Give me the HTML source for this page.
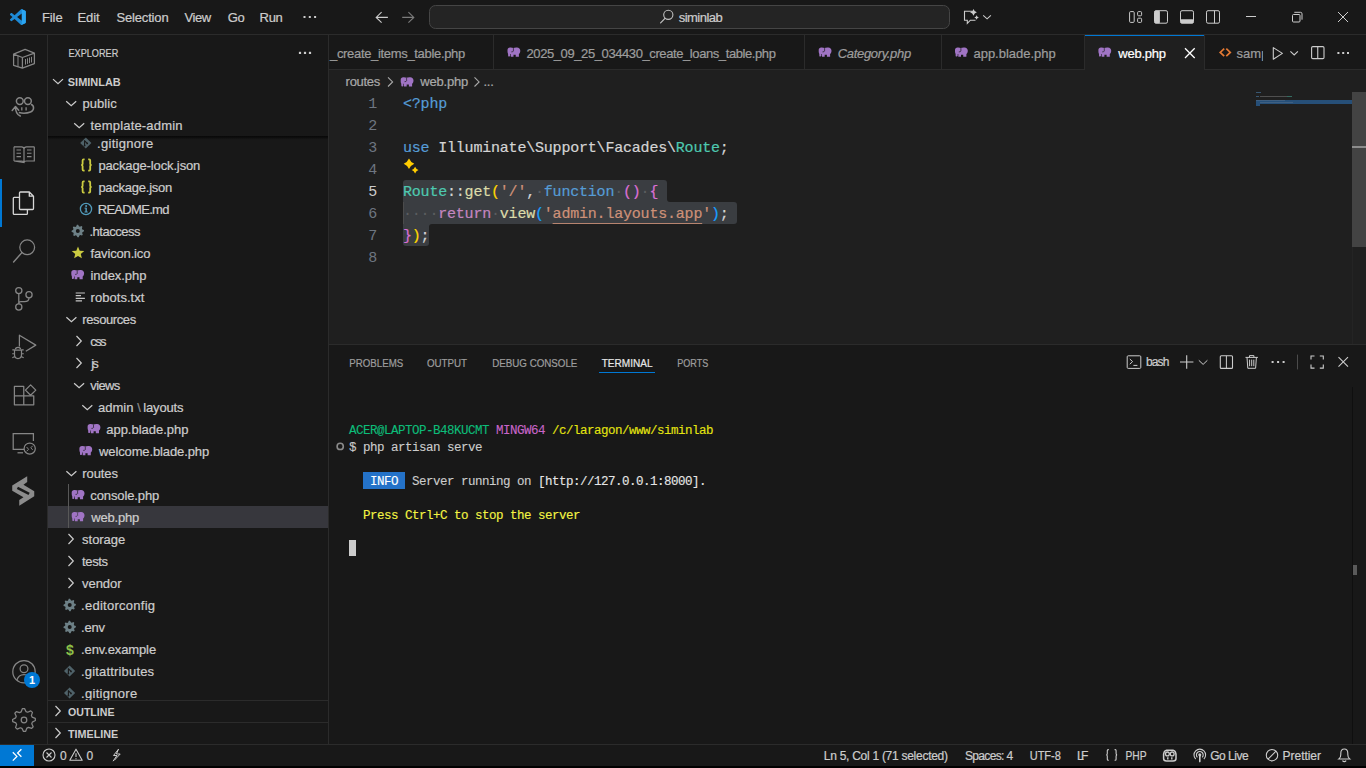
<!DOCTYPE html>
<html><head><meta charset="utf-8"><title>VS Code</title>
<style>*{margin:0;padding:0}html,body{width:1366px;height:768px;overflow:hidden;background:#181818}</style>
</head><body>
<svg width="1366" height="768" viewBox="0 0 1366 768" font-family='"Liberation Sans", sans-serif' style="position:absolute;left:0;top:0">
<defs>
<linearGradient id="shadow" x1="0" y1="0" x2="0" y2="1"><stop offset="0" stop-color="#000" stop-opacity="0.45"/><stop offset="1" stop-color="#000" stop-opacity="0"/></linearGradient>
<clipPath id="c_tree"><rect x="48" y="136" width="280" height="564"/></clipPath>
<clipPath id="c_tabs"><rect x="329" y="35" width="1037" height="35"/></clipPath>
<clipPath id="c_samp"><rect x="1205" y="35" width="58" height="35"/></clipPath>
</defs>
<rect x="0" y="0" width="1366" height="768" fill="#181818" />
<rect x="0" y="34" width="1366" height="1" fill="#2b2b2b" />
<rect x="429.5" y="5.5" width="520" height="23" rx="6" fill="#242424" stroke="#454545" stroke-width="1"/>
<rect x="47" y="35" width="1" height="709" fill="#2b2b2b" />
<rect x="0" y="179" width="2" height="48" fill="#0078d4" />
<rect x="328" y="35" width="1" height="709" fill="#2b2b2b" />
<rect x="48" y="506" width="280" height="22" fill="#37373d" />
<rect x="68" y="484" width="1" height="44" fill="#585858" />
<rect x="329" y="70" width="1037" height="274" fill="#1f1f1f" />
<rect x="329" y="35" width="1037" height="35" fill="#181818" />
<rect x="329" y="69" width="1037" height="1" fill="#2b2b2b" />
<rect x="493" y="35" width="1" height="34" fill="#2b2b2b" />
<rect x="804" y="35" width="1" height="34" fill="#2b2b2b" />
<rect x="941" y="35" width="1" height="34" fill="#2b2b2b" />
<rect x="1084" y="35" width="1" height="34" fill="#2b2b2b" />
<rect x="1204" y="35" width="1" height="34" fill="#2b2b2b" />
<rect x="1085" y="35" width="119" height="35" fill="#1f1f1f" />
<rect x="1085" y="35" width="119" height="1" fill="#0078d4" />
<rect x="329" y="344" width="1037" height="400" fill="#181818" />
<rect x="329" y="344" width="1037" height="1" fill="#2b2b2b" />
<rect x="599" y="372" width="56" height="1" fill="#0078d4" />
<rect x="1352" y="92" width="14" height="155" fill="#434343" />
<rect x="1352" y="146" width="14" height="2" fill="#8c8c8c" />
<rect x="1352" y="247" width="1" height="97" fill="#242424" />
<rect x="1256" y="100" width="96" height="4" fill="#264f78" />
<rect x="1352" y="387" width="1" height="357" fill="#0f0f0f" />
<rect x="1353" y="565" width="4" height="10" fill="#5a5a5a" />
<rect x="48" y="70" width="280" height="66" fill="#181818" />
<rect x="48" y="136" width="280" height="4" fill="url(#shadow)"/>
<rect x="48" y="700" width="280" height="44" fill="#181818" />
<rect x="48" y="700" width="280" height="1" fill="#2b2b2b" />
<rect x="48" y="722" width="280" height="1" fill="#2b2b2b" />
<rect x="0" y="744" width="1366" height="1" fill="#2b2b2b" />
<rect x="0" y="745" width="1366" height="21" fill="#181818" />
<rect x="0" y="766" width="1366" height="2" fill="#000000" />
<rect x="0" y="745" width="34" height="21" fill="#0078d4" />
<path d="M403,183 Q403,180 406,180 H664 Q667,180 667,183 V199 Q667,202 670,202 H734 Q737,202 737,205 V221 Q737,224 734,224 H432 Q429,224 429,227 V243 Q429,246 426,246 H406 Q403,246 403,243 Z" fill="#3a3d41"/>
<text x="377" y="108" text-anchor="end" font-family='"Liberation Mono"' font-size="15" letter-spacing="-0.2" fill="#6e7681">1</text>
<text x="377" y="130" text-anchor="end" font-family='"Liberation Mono"' font-size="15" letter-spacing="-0.2" fill="#6e7681">2</text>
<text x="377" y="152" text-anchor="end" font-family='"Liberation Mono"' font-size="15" letter-spacing="-0.2" fill="#6e7681">3</text>
<text x="377" y="174" text-anchor="end" font-family='"Liberation Mono"' font-size="15" letter-spacing="-0.2" fill="#6e7681">4</text>
<text x="377" y="196" text-anchor="end" font-family='"Liberation Mono"' font-size="15" letter-spacing="-0.2" fill="#cccccc">5</text>
<text x="377" y="218" text-anchor="end" font-family='"Liberation Mono"' font-size="15" letter-spacing="-0.2" fill="#6e7681">6</text>
<text x="377" y="240" text-anchor="end" font-family='"Liberation Mono"' font-size="15" letter-spacing="-0.2" fill="#6e7681">7</text>
<text x="377" y="262" text-anchor="end" font-family='"Liberation Mono"' font-size="15" letter-spacing="-0.2" fill="#6e7681">8</text>
<text y="108" font-family='"Liberation Mono"' font-size="15" letter-spacing="-0.2"><tspan x="403.00" fill="#569cd6" stroke="#569cd6" stroke-width="0.2">&lt;?php</tspan></text>
<text y="152" font-family='"Liberation Mono"' font-size="15" letter-spacing="-0.2"><tspan x="403.00" fill="#569cd6" stroke="#569cd6" stroke-width="0.2">use</tspan><tspan x="438.20" fill="#d4d4d4" stroke="#d4d4d4" stroke-width="0.2">Illuminate\Support\Facades\</tspan><tspan x="675.80" fill="#4ec9b0" stroke="#4ec9b0" stroke-width="0.2">Route</tspan><tspan x="719.80" fill="#d4d4d4" stroke="#d4d4d4" stroke-width="0.2">;</tspan></text>
<text y="196" font-family='"Liberation Mono"' font-size="15" letter-spacing="-0.2"><tspan x="403.00" fill="#4ec9b0" stroke="#4ec9b0" stroke-width="0.2">Route</tspan><tspan x="447.00" fill="#d4d4d4" stroke="#d4d4d4" stroke-width="0.2">::</tspan><tspan x="464.60" fill="#dcdcaa" stroke="#dcdcaa" stroke-width="0.2">get</tspan><tspan x="491.00" fill="#ffd700" stroke="#ffd700" stroke-width="0.2">(</tspan><tspan x="499.80" fill="#ce9178" stroke="#ce9178" stroke-width="0.2">&#x27;/&#x27;</tspan><tspan x="526.20" fill="#d4d4d4" stroke="#d4d4d4" stroke-width="0.2">,</tspan><tspan x="535.00" fill="#5b5d60">·</tspan><tspan x="543.80" fill="#569cd6" stroke="#569cd6" stroke-width="0.2">function</tspan><tspan x="614.20" fill="#5b5d60">·</tspan><tspan x="623.00" fill="#da70d6" stroke="#da70d6" stroke-width="0.2">()</tspan><tspan x="640.60" fill="#5b5d60">·</tspan><tspan x="649.40" fill="#da70d6" stroke="#da70d6" stroke-width="0.2">{</tspan></text>
<text y="218" font-family='"Liberation Mono"' font-size="15" letter-spacing="-0.2"><tspan x="403.00" fill="#5b5d60">····</tspan><tspan x="438.20" fill="#c586c0" stroke="#c586c0" stroke-width="0.2">return</tspan><tspan x="491.00" fill="#5b5d60">·</tspan><tspan x="499.80" fill="#dcdcaa" stroke="#dcdcaa" stroke-width="0.2">view</tspan><tspan x="535.00" fill="#179fff" stroke="#179fff" stroke-width="0.2">(</tspan><tspan x="543.80" fill="#ce9178" stroke="#ce9178" stroke-width="0.2">&#x27;admin.layouts.app&#x27;</tspan><tspan x="711.00" fill="#179fff" stroke="#179fff" stroke-width="0.2">)</tspan><tspan x="719.80" fill="#d4d4d4" stroke="#d4d4d4" stroke-width="0.2">;</tspan></text>
<text y="240" font-family='"Liberation Mono"' font-size="15" letter-spacing="-0.2"><tspan x="403.00" fill="#da70d6" stroke="#da70d6" stroke-width="0.2">}</tspan><tspan x="411.80" fill="#ffd700" stroke="#ffd700" stroke-width="0.2">)</tspan><tspan x="420.60" fill="#d4d4d4" stroke="#d4d4d4" stroke-width="0.2">;</tspan></text>
<rect x="552.6" y="223" width="149.6" height="1" fill="#ce9178" opacity="0.85"/>
<rect x="403" y="202" width="1" height="22" fill="#4b4b4b"/>
<rect x="363" y="472" width="42" height="17" fill="#2472c8"/>
<text y="434" font-family='"Liberation Mono"' font-size="12.5" letter-spacing="-0.5" style="white-space:pre"><tspan x="349.00" fill="#0dbc79" stroke="#0dbc79" stroke-width="0.12">ACER@LAPTOP-B48KUCMT</tspan><tspan x="496.00" fill="#c865c8" stroke="#c865c8" stroke-width="0.12">MINGW64</tspan><tspan x="552.00" fill="#e5e510" stroke="#e5e510" stroke-width="0.12">/c/laragon/www/siminlab</tspan></text>
<text y="451" font-family='"Liberation Mono"' font-size="12.5" letter-spacing="-0.5" style="white-space:pre"><tspan x="349.00" fill="#cccccc" stroke="#cccccc" stroke-width="0.12">$ php artisan serve</tspan></text>
<text y="485" font-family='"Liberation Mono"' font-size="12.5" letter-spacing="-0.5" style="white-space:pre"><tspan x="363.00" fill="#ffffff" stroke="#ffffff" stroke-width="0.12"> INFO </tspan><tspan x="405.00" fill="#cccccc" stroke="#cccccc" stroke-width="0.12"> Server running on </tspan><tspan x="538.00" fill="#e5e5e5" stroke="#e5e5e5" stroke-width="0.12">[http</tspan><tspan x="573.00" fill="#e5e5e5" stroke="#e5e5e5" stroke-width="0.12">:</tspan><tspan x="580.00" fill="#e5e5e5" stroke="#e5e5e5" stroke-width="0.12">//127.0.0.1:8000].</tspan></text>
<text y="519" font-family='"Liberation Mono"' font-size="12.5" letter-spacing="-0.5" style="white-space:pre"><tspan x="363.00" fill="#f5f543" stroke="#f5f543" stroke-width="0.12">Press Ctrl+C to stop the server</tspan></text>
<rect x="349" y="540" width="7" height="16" fill="#cccccc"/>
<text x="42.00" y="22" font-size="13" fill="#cccccc" letter-spacing="-0.106" stroke="#cccccc" stroke-width="0.22">File</text>
<text x="77.50" y="22" font-size="13" fill="#cccccc" letter-spacing="-0.063" stroke="#cccccc" stroke-width="0.22">Edit</text>
<text x="116.50" y="22" font-size="13" fill="#cccccc" letter-spacing="-0.169" stroke="#cccccc" stroke-width="0.22">Selection</text>
<text x="184.50" y="22" font-size="13" fill="#cccccc" letter-spacing="-0.451" stroke="#cccccc" stroke-width="0.22">View</text>
<text x="227.80" y="22" font-size="13" fill="#cccccc" letter-spacing="-0.412" stroke="#cccccc" stroke-width="0.22">Go</text>
<text x="259.60" y="22" font-size="13" fill="#cccccc" letter-spacing="-0.309" stroke="#cccccc" stroke-width="0.22">Run</text>
<text x="678.70" y="22" font-size="13" fill="#cccccc" letter-spacing="-0.522" stroke="#cccccc" stroke-width="0.22">siminlab</text>
<text x="68.50" y="57" font-size="11" fill="#cccccc" textLength="49.75" lengthAdjust="spacingAndGlyphs" stroke="#cccccc" stroke-width="0.22">EXPLORER</text>
<text x="97.00" y="148" font-size="13" fill="#cccccc" letter-spacing="0.306" clip-path="url(#c_tree)" stroke="#cccccc" stroke-width="0.22">.gitignore</text>
<text x="98.40" y="170" font-size="13" fill="#cccccc" letter-spacing="-0.133" clip-path="url(#c_tree)" stroke="#cccccc" stroke-width="0.22">package-lock.json</text>
<text x="98.40" y="192" font-size="13" fill="#cccccc" letter-spacing="-0.253" clip-path="url(#c_tree)" stroke="#cccccc" stroke-width="0.22">package.json</text>
<text x="97.70" y="214" font-size="13" fill="#cccccc" letter-spacing="-0.695" clip-path="url(#c_tree)" stroke="#cccccc" stroke-width="0.22">README.md</text>
<text x="89.50" y="236" font-size="13" fill="#cccccc" letter-spacing="-0.502" clip-path="url(#c_tree)" stroke="#cccccc" stroke-width="0.22">.htaccess</text>
<text x="90.50" y="258" font-size="13" fill="#cccccc" letter-spacing="-0.149" clip-path="url(#c_tree)" stroke="#cccccc" stroke-width="0.22">favicon.ico</text>
<text x="90.50" y="280" font-size="13" fill="#cccccc" letter-spacing="-0.056" clip-path="url(#c_tree)" stroke="#cccccc" stroke-width="0.22">index.php</text>
<text x="90.50" y="302" font-size="13" fill="#cccccc" letter-spacing="0.050" clip-path="url(#c_tree)" stroke="#cccccc" stroke-width="0.22">robots.txt</text>
<text x="82.30" y="324" font-size="13" fill="#cccccc" letter-spacing="-0.397" clip-path="url(#c_tree)" stroke="#cccccc" stroke-width="0.22">resources</text>
<text x="90.30" y="346" font-size="13" fill="#cccccc" letter-spacing="-1.650" clip-path="url(#c_tree)" stroke="#cccccc" stroke-width="0.22">css</text>
<text x="91.30" y="368" font-size="13" fill="#cccccc" letter-spacing="-1.988" clip-path="url(#c_tree)" stroke="#cccccc" stroke-width="0.22">js</text>
<text x="90.30" y="390" font-size="13" fill="#cccccc" letter-spacing="-0.627" clip-path="url(#c_tree)" stroke="#cccccc" stroke-width="0.22">views</text>
<text x="106.20" y="434" font-size="13" fill="#cccccc" letter-spacing="-0.007" clip-path="url(#c_tree)" stroke="#cccccc" stroke-width="0.22">app.blade.php</text>
<text x="99.00" y="456" font-size="13" fill="#cccccc" letter-spacing="-0.118" clip-path="url(#c_tree)" stroke="#cccccc" stroke-width="0.22">welcome.blade.php</text>
<text x="82.30" y="478" font-size="13" fill="#cccccc" letter-spacing="-0.106" clip-path="url(#c_tree)" stroke="#cccccc" stroke-width="0.22">routes</text>
<text x="90.30" y="500" font-size="13" fill="#cccccc" letter-spacing="-0.118" clip-path="url(#c_tree)" stroke="#cccccc" stroke-width="0.22">console.php</text>
<text x="91.30" y="522" font-size="13" fill="#cccccc" letter-spacing="-0.203" clip-path="url(#c_tree)" stroke="#cccccc" stroke-width="0.22">web.php</text>
<text x="82.10" y="544" font-size="13" fill="#cccccc" letter-spacing="-0.038" clip-path="url(#c_tree)" stroke="#cccccc" stroke-width="0.22">storage</text>
<text x="82.10" y="566" font-size="13" fill="#cccccc" letter-spacing="-0.363" clip-path="url(#c_tree)" stroke="#cccccc" stroke-width="0.22">tests</text>
<text x="82.10" y="588" font-size="13" fill="#cccccc" letter-spacing="-0.064" clip-path="url(#c_tree)" stroke="#cccccc" stroke-width="0.22">vendor</text>
<text x="81.10" y="610" font-size="13" fill="#cccccc" letter-spacing="0.259" clip-path="url(#c_tree)" stroke="#cccccc" stroke-width="0.22">.editorconfig</text>
<text x="81.10" y="632" font-size="13" fill="#cccccc" letter-spacing="-0.224" clip-path="url(#c_tree)" stroke="#cccccc" stroke-width="0.22">.env</text>
<text x="81.10" y="654" font-size="13" fill="#cccccc" letter-spacing="-0.121" clip-path="url(#c_tree)" stroke="#cccccc" stroke-width="0.22">.env.example</text>
<text x="81.00" y="676" font-size="13" fill="#cccccc" letter-spacing="0.176" clip-path="url(#c_tree)" stroke="#cccccc" stroke-width="0.22">.gitattributes</text>
<text x="81.00" y="698" font-size="13" fill="#cccccc" letter-spacing="0.306" clip-path="url(#c_tree)" stroke="#cccccc" stroke-width="0.22">.gitignore</text>
<text x="98.00" y="412" font-size="13" fill="#cccccc" letter-spacing="0.006" clip-path="url(#c_tree)" stroke="#cccccc" stroke-width="0.22">admin</text>
<text x="137.20" y="412" font-size="13" fill="#8b8b8b" clip-path="url(#c_tree)" stroke="#8b8b8b" stroke-width="0.22">\</text>
<text x="143.30" y="412" font-size="13" fill="#cccccc" letter-spacing="-0.165" clip-path="url(#c_tree)" stroke="#cccccc" stroke-width="0.22">layouts</text>
<text x="67.80" y="85.5" font-size="11" fill="#cccccc" textLength="52.94" lengthAdjust="spacingAndGlyphs" font-weight="bold">SIMINLAB</text>
<text x="82.50" y="108" font-size="13" fill="#cccccc" letter-spacing="0.047" stroke="#cccccc" stroke-width="0.22">public</text>
<text x="90.50" y="130" font-size="13" fill="#cccccc" letter-spacing="0.187" stroke="#cccccc" stroke-width="0.22">template-admin</text>
<text x="68.00" y="716" font-size="11" fill="#cccccc" textLength="46.52" lengthAdjust="spacingAndGlyphs" font-weight="bold">OUTLINE</text>
<text x="68.00" y="738" font-size="11" fill="#cccccc" textLength="50.23" lengthAdjust="spacingAndGlyphs" font-weight="bold">TIMELINE</text>
<text x="330.00" y="57.5" font-size="13" fill="#9d9d9d" letter-spacing="-0.325" clip-path="url(#c_tabs)" stroke="#9d9d9d" stroke-width="0.22">_create_items_table.php</text>
<text x="526.50" y="57.5" font-size="13" fill="#9d9d9d" letter-spacing="-0.407" stroke="#9d9d9d" stroke-width="0.22">2025_09_25_034430_create_loans_table.php</text>
<text x="837.80" y="57.5" font-size="13" fill="#9d9d9d" font-style="italic" letter-spacing="-0.341" stroke="#9d9d9d" stroke-width="0.22">Category.php</text>
<text x="973.50" y="57.5" font-size="13" fill="#9d9d9d" letter-spacing="-0.023" stroke="#9d9d9d" stroke-width="0.22">app.blade.php</text>
<text x="1118.30" y="57.5" font-size="13" fill="#ffffff" letter-spacing="-0.237" stroke="#ffffff" stroke-width="0.22">web.php</text>
<text x="1236.60" y="57.5" font-size="13" fill="#9d9d9d" clip-path="url(#c_samp)" stroke="#9d9d9d" stroke-width="0.22">sample.html</text>
<text x="345.60" y="86" font-size="13" fill="#a9a9a9" letter-spacing="-0.286" stroke="#a9a9a9" stroke-width="0.22">routes</text>
<text x="420.20" y="86" font-size="13" fill="#a9a9a9" letter-spacing="-0.187" stroke="#a9a9a9" stroke-width="0.22">web.php</text>
<text x="483.40" y="86" font-size="13" fill="#a9a9a9" letter-spacing="-0.212" stroke="#a9a9a9" stroke-width="0.22">...</text>
<text x="349.30" y="367" font-size="11" fill="#9d9d9d" textLength="53.90" lengthAdjust="spacingAndGlyphs" stroke="#9d9d9d" stroke-width="0.22">PROBLEMS</text>
<text x="426.90" y="367" font-size="11" fill="#9d9d9d" textLength="40.15" lengthAdjust="spacingAndGlyphs" stroke="#9d9d9d" stroke-width="0.22">OUTPUT</text>
<text x="492.20" y="367" font-size="11" fill="#9d9d9d" textLength="85.20" lengthAdjust="spacingAndGlyphs" stroke="#9d9d9d" stroke-width="0.22">DEBUG CONSOLE</text>
<text x="601.70" y="367" font-size="11" fill="#e7e7e7" textLength="50.81" lengthAdjust="spacingAndGlyphs" stroke="#e7e7e7" stroke-width="0.22">TERMINAL</text>
<text x="677.20" y="367" font-size="11" fill="#9d9d9d" textLength="31.08" lengthAdjust="spacingAndGlyphs" stroke="#9d9d9d" stroke-width="0.22">PORTS</text>
<text x="1145.90" y="366" font-size="12" fill="#cccccc" letter-spacing="-0.816" stroke="#cccccc" stroke-width="0.22">bash</text>
<text x="60.00" y="760" font-size="12" fill="#cccccc" stroke="#cccccc" stroke-width="0.22">0</text>
<text x="86.60" y="760" font-size="12" fill="#cccccc" stroke="#cccccc" stroke-width="0.22">0</text>
<text x="823.80" y="760" font-size="12" fill="#cccccc" letter-spacing="-0.273" stroke="#cccccc" stroke-width="0.22">Ln 5, Col 1 (71 selected)</text>
<text x="965.00" y="760" font-size="12" fill="#cccccc" letter-spacing="-0.662" stroke="#cccccc" stroke-width="0.22">Spaces: 4</text>
<text x="1029.70" y="760" font-size="12" fill="#cccccc" textLength="31.20" lengthAdjust="spacingAndGlyphs" stroke="#cccccc" stroke-width="0.22">UTF-8</text>
<text x="1077.00" y="760" font-size="12" fill="#cccccc" letter-spacing="-2.574" stroke="#cccccc" stroke-width="0.22">LF</text>
<text x="1125.40" y="760" font-size="12" fill="#cccccc" textLength="21.20" lengthAdjust="spacingAndGlyphs" stroke="#cccccc" stroke-width="0.22">PHP</text>
<text x="1210.20" y="760" font-size="12" fill="#cccccc" letter-spacing="-0.480" stroke="#cccccc" stroke-width="0.22">Go Live</text>
<text x="1282.60" y="760" font-size="12" fill="#cccccc" letter-spacing="-0.040" stroke="#cccccc" stroke-width="0.22">Prettier</text>
<g transform="translate(9.9,9.1) scale(0.159)"><path d="M96.46 10.8L75.86.87C73.47-.28 70.62.2 68.75 2.08L29.34 38.05 12.17 25.02c-1.6-1.21-3.83-1.11-5.32.24L1.34 30.28c-1.82 1.65-1.82 4.51 0 6.16L16.23 50 1.34 63.56c-1.82 1.65-1.82 4.51 0 6.16l5.51 5.01c1.49 1.36 3.72 1.46 5.32.24l17.17-13.03 39.41 35.96c1.87 1.87 4.72 2.36 7.11 1.21l20.6-9.92C98.6 88.02 100 85.77 100 83.31V16.69c0-2.46-1.4-4.71-3.54-5.89zM75.01 72.7 45.1 50l29.91-22.7v45.4z" fill="#1e8ad6"/><path d="M75.86.87 96.46 10.8C98.6 11.98 100 14.23 100 16.69V83.31C100 85.77 98.6 88.02 96.46 89.2L75.86 99.13C73.5 100.2 71 100 69 98.5 71.5 99 75 97.5 75 94V6C75 2.5 71.5 1 69 1.5 71 0 73.5-.2 75.86.87Z" fill="#2ba5f1"/></g>
<rect x="303.5" y="16" width="2" height="2" fill="#cccccc"/>
<rect x="308.8" y="16" width="2" height="2" fill="#cccccc"/>
<rect x="314.1" y="16" width="2" height="2" fill="#cccccc"/>
<path d="M387.9,17.4 H376.2 M381.6,12.2 L376.2,17.4 L381.6,22.6" fill="none" stroke="#cccccc" stroke-width="1.1"/>
<path d="M402.2,17.4 H413.8 M408.4,12.2 L413.8,17.4 L408.4,22.6" fill="none" stroke="#7b7b7b" stroke-width="1.1"/>
<circle cx="668.3" cy="14.8" r="4.6" fill="none" stroke="#c0c0c0" stroke-width="1.1"/>
<path d="M665,18.3 L660.6,22.9" fill="none" stroke="#c0c0c0" stroke-width="1.2" stroke-linecap="round"/>
<path d="M972,11.3 H964.5 V20.2 H967.3 V23.3 L970.4,20.2 H975.5" fill="none" stroke="#cccccc" stroke-width="1.1"/>
<path d="M973.5,8.9 Q974.248,11.552000000000001 976.9,12.3 Q974.248,13.048 973.5,15.700000000000001 Q972.752,13.048 970.1,12.3 Q972.752,11.552000000000001 973.5,8.9 Z" fill="#cccccc"/>
<path d="M976.6,15.2 Q977.106,16.994 978.9,17.5 Q977.106,18.006 976.6,19.8 Q976.094,18.006 974.3000000000001,17.5 Q976.094,16.994 976.6,15.2 Z" fill="#cccccc"/>
<polyline points="983.2,15.3 987.1,18.8 990.9,15.3" fill="none" stroke="#cccccc" stroke-width="1.1"/>
<rect x="1129.6" y="11.6" width="4.6" height="10.8" rx="1" fill="none" stroke="#cccccc" stroke-width="1"/>
<rect x="1137.6" y="11.6" width="4" height="4.2" rx="1" fill="none" stroke="#cccccc" stroke-width="1"/>
<rect x="1137.6" y="18.2" width="4" height="4.2" rx="1" fill="none" stroke="#cccccc" stroke-width="1"/>
<rect x="1154.5" y="10.7" width="13" height="12.5" rx="1.5" fill="none" stroke="#cccccc" stroke-width="1"/>
<rect x="1154.5" y="10.7" width="5.4" height="12.5" rx="1" fill="#cccccc"/>
<rect x="1180.5" y="10.7" width="13" height="12.5" rx="1.5" fill="none" stroke="#cccccc" stroke-width="1"/>
<rect x="1180.5" y="19.2" width="13" height="4" rx="1" fill="#cccccc"/>
<rect x="1206.5" y="10.7" width="13" height="12.5" rx="1.5" fill="none" stroke="#cccccc" stroke-width="1"/>
<rect x="1214" y="10.7" width="1" height="12.5" fill="#cccccc"/>
<rect x="1246" y="16" width="10" height="1" fill="#cccccc"/>
<rect x="1292.5" y="14.5" width="7.5" height="7.5" rx="1" fill="none" stroke="#cccccc" stroke-width="1"/>
<path d="M1294.3,12.3 H1300.5 Q1302,12.3 1302,13.8 V19.7" fill="none" stroke="#cccccc" stroke-width="1"/>
<path d="M1338,12 L1348,22 M1348,12 L1338,22" stroke="#cccccc" stroke-width="1"/>
<path d="M25.1,49.4 L34.4,53.1 L22.4,57.5 L13.6,54.1 Z M13.6,54.1 V65.3 L22.4,68.2 V57.5 M22.4,68.2 L34.4,63.6 V53.1" fill="none" stroke="#868686" stroke-width="1.25" stroke-linejoin="round"/>
<path d="M18,55.8 V66.6 M25.5,59 V64.6 M27.5,58.3 V63.9 M29.5,57.5 V63.2 M31.5,56.8 V62.5" fill="none" stroke="#868686" stroke-width="1"/>
<circle cx="19.8" cy="101.1" r="3.4" fill="none" stroke="#868686" stroke-width="1.5"/>
<circle cx="27.9" cy="101.1" r="3.4" fill="none" stroke="#868686" stroke-width="1.5"/>
<path d="M31,104.2 C34.5,105.5 34.5,110.5 30.5,112 C27,113.4 22,113.3 18.8,112.6" fill="none" stroke="#868686" stroke-width="1.5"/>
<path d="M21.8,107.2 V110.6 M26.1,107.2 V110.6" stroke="#868686" stroke-width="1.3"/>
<path d="M15.5,107 C15.5,111 16.5,114.5 20.3,116 M12.2,110.4 L15.5,106.6 L18.7,110.2" fill="none" stroke="#868686" stroke-width="1.5" stroke-linecap="round" stroke-linejoin="round"/>
<path d="M14,146.8 H21.5 Q24,146.8 24,149 V162.5 M24,162.5 Q24,161 21.5,161 H14 Z M34.3,146.8 H26.5 Q24,146.8 24,149 M24,162.5 Q24,161 26.5,161 H34.3 V146.8" fill="none" stroke="#868686" stroke-width="1.2"/>
<path d="M14,146.8 V161 M16.5,150 H21 M16.5,153.3 H21 M16.5,156.6 H21 M27,150 H31.5 M27,153.3 H31.5 M27,156.6 H31.5" fill="none" stroke="#868686" stroke-width="1.1"/>
<path d="M19.5,196.5 V208.6 Q19.5,209.5 20.4,209.5 H32.6 Q33.5,209.5 33.5,208.6 V196.2 L29.3,192 H20.4 Q19.5,192 19.5,192.9 Z M29.3,192 V196.2 H33.5" fill="none" stroke="#d7d7d7" stroke-width="1.3" stroke-linejoin="round"/>
<path d="M19.5,197.3 H14.2 Q13.3,197.3 13.3,198.2 V213.5 Q13.3,214.4 14.2,214.4 H26.5 Q27.4,214.4 27.4,213.5 V209.5" fill="none" stroke="#d7d7d7" stroke-width="1.3"/>
<circle cx="27.2" cy="247.3" r="7.4" fill="none" stroke="#868686" stroke-width="1.25"/>
<path d="M21.9,252.6 L13.6,262" stroke="#868686" stroke-width="1.4" stroke-linecap="round"/>
<circle cx="18.8" cy="290.6" r="3.1" fill="none" stroke="#868686" stroke-width="1.25"/>
<circle cx="18.8" cy="307" r="3.1" fill="none" stroke="#868686" stroke-width="1.25"/>
<circle cx="29" cy="294.8" r="3.1" fill="none" stroke="#868686" stroke-width="1.25"/>
<path d="M18.8,293.7 V303.9 M29,297.9 Q29,301.5 24.5,301.5 H21 Q18.8,301.5 18.8,303.5" fill="none" stroke="#868686" stroke-width="1.25"/>
<path d="M19.4,346.5 V335.2 L35.8,345.1 L25.8,351.2" fill="none" stroke="#868686" stroke-width="1.25" stroke-linejoin="round"/>
<path d="M15.4,349.6 Q15.4,347.4 18,347.4 Q20.6,347.4 20.6,349.6" fill="none" stroke="#868686" stroke-width="1.2"/>
<path d="M14.5,350.2 H21.5 V354.6 Q21.5,358.6 18,358.6 Q14.5,358.6 14.5,354.6 Z" fill="none" stroke="#868686" stroke-width="1.2"/>
<path d="M12.3,349.9 H14.5 M21.5,349.9 H23.7 M12.2,353.8 H14.5 M21.5,353.8 H23.8 M12.3,357.8 L14.8,356.6 M23.7,357.8 L21.2,356.6" fill="none" stroke="#868686" stroke-width="1.1"/>
<path d="M14.4,386.4 H23.75 V404.75 H14.4 Z M14.4,395.75 H33.75 V404.75 H23.75" fill="none" stroke="#868686" stroke-width="1.25" stroke-linejoin="round"/>
<path d="M30.6,384.9 L35.8,390.1 L30.6,395.3 L25.4,390.1 Z" fill="none" stroke="#868686" stroke-width="1.25" stroke-linejoin="round"/>
<path d="M24,449.3 H13.2 V433.5 H33.4 V441" fill="none" stroke="#868686" stroke-width="1.25"/>
<path d="M17.5,452.8 H23" stroke="#868686" stroke-width="1.25"/>
<circle cx="29.7" cy="448.6" r="5.6" fill="#181818" stroke="#868686" stroke-width="1.25"/>
<path d="M26.6,447 L28.6,449.3 L26.6,451.3 M32.7,445.8 L30.8,447.8 L32.7,449.9" fill="none" stroke="#868686" stroke-width="1"/>
<polygon points="27.21,476.22 12.22,485.59 12.22,490.74 23.46,497.30 19.25,500.12 19.25,505.74 34.24,496.37 34.24,491.21 23.46,484.65 27.21,482.07" fill="#8c8c8c"/>
<path d="M17.4,487.9 L29.1,493.8" stroke="#181818" stroke-width="2.6"/>
<circle cx="24" cy="671.7" r="11.2" fill="none" stroke="#868686" stroke-width="1.25"/>
<circle cx="24" cy="668.8" r="3.9" fill="none" stroke="#868686" stroke-width="1.25"/>
<path d="M16.8,680.3 Q18.5,674.5 24,674.5 Q29.5,674.5 31.2,680.3" fill="none" stroke="#868686" stroke-width="1.25"/>
<circle cx="32" cy="680" r="8" fill="#0078d4"/>
<text x="32" y="684.2" text-anchor="middle" font-size="11" font-weight="bold" fill="#ffffff">1</text>
<polygon points="22.33,708.72 24.56,708.61 26.09,711.66 27.68,712.23 30.79,710.84 32.45,712.34 31.38,715.58 32.10,717.10 35.28,718.33 35.39,720.56 32.34,722.09 31.77,723.68 33.16,726.79 31.66,728.45 28.42,727.38 26.90,728.10 25.67,731.28 23.44,731.39 21.91,728.34 20.32,727.77 17.21,729.16 15.55,727.66 16.62,724.42 15.90,722.90 12.72,721.67 12.61,719.44 15.66,717.91 16.23,716.32 14.84,713.21 16.34,711.55 19.58,712.62 21.10,711.90" fill="none" stroke="#868686" stroke-width="1.25" stroke-linejoin="round"/><circle cx="24" cy="720" r="2.8" fill="none" stroke="#868686" stroke-width="1.25"/>
<rect x="298.9" y="51.8" width="2.2" height="2.2" fill="#cccccc"/>
<rect x="303.9" y="51.8" width="2.2" height="2.2" fill="#cccccc"/>
<rect x="308.9" y="51.8" width="2.2" height="2.2" fill="#cccccc"/>
<polyline points="53,79.10000000000001 58.0,83.7 63,79.10000000000001" fill="none" stroke="#cccccc" stroke-width="1.2"/>
<polyline points="66.2,101.2 71.2,105.8 76.2,101.2" fill="none" stroke="#cccccc" stroke-width="1.2"/>
<polyline points="74.2,123.2 79.2,127.8 84.2,123.2" fill="none" stroke="#cccccc" stroke-width="1.2"/>
<polyline points="66.4,317.2 71.4,321.8 76.4,317.2" fill="none" stroke="#cccccc" stroke-width="1.2"/>
<polyline points="76.5,336.0 81.3,341 76.5,346.0" fill="none" stroke="#cccccc" stroke-width="1.2"/>
<polyline points="76.5,358.0 81.3,363 76.5,368.0" fill="none" stroke="#cccccc" stroke-width="1.2"/>
<polyline points="74.1,383.2 79.1,387.8 84.1,383.2" fill="none" stroke="#cccccc" stroke-width="1.2"/>
<polyline points="82.3,405.2 87.3,409.8 92.3,405.2" fill="none" stroke="#cccccc" stroke-width="1.2"/>
<polyline points="66.4,471.2 71.4,475.8 76.4,471.2" fill="none" stroke="#cccccc" stroke-width="1.2"/>
<polyline points="68.5,534.0 73.3,539 68.5,544.0" fill="none" stroke="#cccccc" stroke-width="1.2"/>
<polyline points="68.5,556.0 73.3,561 68.5,566.0" fill="none" stroke="#cccccc" stroke-width="1.2"/>
<polyline points="68.5,578.0 73.3,583 68.5,588.0" fill="none" stroke="#cccccc" stroke-width="1.2"/>
<polyline points="55.5,706.0 60.3,711 55.5,716.0" fill="none" stroke="#cccccc" stroke-width="1.2"/>
<polyline points="55.5,728.0 60.3,733 55.5,738.0" fill="none" stroke="#cccccc" stroke-width="1.2"/>
<g clip-path="url(#c_tree)"><path d="M85.8,137.4 L91.39999999999999,143 L85.8,148.6 L80.2,143 Z" fill="#4f6269"/><path d="M84.2,140.4 L87.0,143.2 M84.6,140.8 V145.6" stroke="#181818" stroke-width="1.1"/><circle cx="87.2" cy="143.4" r="0.9" fill="#181818"/><circle cx="84.6" cy="145.6" r="0.9" fill="#181818"/><path d="M84.6,159.4 H83.6 Q82.6,159.4 82.6,160.4 V164 Q82.6,165 81.19999999999999,165 Q82.6,165 82.6,166 V169.6 Q82.6,170.6 83.6,170.6 H84.6" fill="none" stroke="#cbcb41" stroke-width="1.8"/><path d="M88.19999999999999,159.4 H89.19999999999999 Q90.19999999999999,159.4 90.19999999999999,160.4 V164 Q90.19999999999999,165 91.6,165 Q90.19999999999999,165 90.19999999999999,166 V169.6 Q90.19999999999999,170.6 89.19999999999999,170.6 H88.19999999999999" fill="none" stroke="#cbcb41" stroke-width="1.8"/><path d="M84.6,181.4 H83.6 Q82.6,181.4 82.6,182.4 V186 Q82.6,187 81.19999999999999,187 Q82.6,187 82.6,188 V191.6 Q82.6,192.6 83.6,192.6 H84.6" fill="none" stroke="#cbcb41" stroke-width="1.8"/><path d="M88.19999999999999,181.4 H89.19999999999999 Q90.19999999999999,181.4 90.19999999999999,182.4 V186 Q90.19999999999999,187 91.6,187 Q90.19999999999999,187 90.19999999999999,188 V191.6 Q90.19999999999999,192.6 89.19999999999999,192.6 H88.19999999999999" fill="none" stroke="#cbcb41" stroke-width="1.8"/><circle cx="86" cy="209" r="5.6" fill="none" stroke="#519aba" stroke-width="1.3"/><circle cx="86.1" cy="206.1" r="1" fill="#519aba"/><rect x="85.4" y="207.7" width="1.5" height="4.4" fill="#519aba"/><rect x="84.5" y="207.7" width="1.5" height="0.9" fill="#519aba"/><rect x="84.5" y="211.5" width="3.3" height="1" fill="#519aba"/><polygon points="76.89,224.87 78.10,224.81 78.97,226.34 79.85,226.66 81.49,226.02 82.39,226.84 81.92,228.53 82.32,229.38 83.93,230.09 83.99,231.30 82.46,232.17 82.14,233.05 82.78,234.69 81.96,235.59 80.27,235.12 79.42,235.52 78.71,237.13 77.50,237.19 76.63,235.66 75.75,235.34 74.11,235.98 73.21,235.16 73.68,233.47 73.28,232.62 71.67,231.91 71.61,230.70 73.14,229.83 73.46,228.95 72.82,227.31 73.64,226.41 75.33,226.88 76.18,226.48" fill="#6d8086"/><circle cx="77.8" cy="231" r="2.0" fill="#181818"/><polygon points="78.00,246.40 79.70,250.65 84.28,250.96 80.76,253.90 81.88,258.34 78.00,255.90 74.12,258.34 75.24,253.90 71.72,250.96 76.30,250.65" fill="#cbcb41"/><g transform="translate(71.3,269.9) scale(1.0)"><path d="M2.6,0.1 C4,0 5,0.3 5.8,0.6 C6.6,0.2 8,0 9.5,0.1 C11.5,0.2 12.8,1.4 12.8,3.4 C12.8,5 12.2,6 11.4,6.6 V9.3 H8.2 V7.3 H6 V9.3 H3.3 V6.6 H2.7 V8.2 Q2.7,9.2 1.6,9.2 Q0.6,9.2 0.6,8 V6.6 C0.2,6 0,5 0,4.2 V2.6 C0,1 1,0.1 2.6,0.1 Z" fill="#a074c4"/><path d="M5.9,0.7 V3.7 Q5.8,4.5 3.8,4.5" fill="none" stroke="#181818" stroke-width="0.8" opacity="0.85"/></g><g transform="translate(87.6,423.9) scale(1.0)"><path d="M2.6,0.1 C4,0 5,0.3 5.8,0.6 C6.6,0.2 8,0 9.5,0.1 C11.5,0.2 12.8,1.4 12.8,3.4 C12.8,5 12.2,6 11.4,6.6 V9.3 H8.2 V7.3 H6 V9.3 H3.3 V6.6 H2.7 V8.2 Q2.7,9.2 1.6,9.2 Q0.6,9.2 0.6,8 V6.6 C0.2,6 0,5 0,4.2 V2.6 C0,1 1,0.1 2.6,0.1 Z" fill="#a074c4"/><path d="M5.9,0.7 V3.7 Q5.8,4.5 3.8,4.5" fill="none" stroke="#181818" stroke-width="0.8" opacity="0.85"/></g><g transform="translate(79.4,445.9) scale(1.0)"><path d="M2.6,0.1 C4,0 5,0.3 5.8,0.6 C6.6,0.2 8,0 9.5,0.1 C11.5,0.2 12.8,1.4 12.8,3.4 C12.8,5 12.2,6 11.4,6.6 V9.3 H8.2 V7.3 H6 V9.3 H3.3 V6.6 H2.7 V8.2 Q2.7,9.2 1.6,9.2 Q0.6,9.2 0.6,8 V6.6 C0.2,6 0,5 0,4.2 V2.6 C0,1 1,0.1 2.6,0.1 Z" fill="#a074c4"/><path d="M5.9,0.7 V3.7 Q5.8,4.5 3.8,4.5" fill="none" stroke="#181818" stroke-width="0.8" opacity="0.85"/></g><g transform="translate(71.7,489.9) scale(1.0)"><path d="M2.6,0.1 C4,0 5,0.3 5.8,0.6 C6.6,0.2 8,0 9.5,0.1 C11.5,0.2 12.8,1.4 12.8,3.4 C12.8,5 12.2,6 11.4,6.6 V9.3 H8.2 V7.3 H6 V9.3 H3.3 V6.6 H2.7 V8.2 Q2.7,9.2 1.6,9.2 Q0.6,9.2 0.6,8 V6.6 C0.2,6 0,5 0,4.2 V2.6 C0,1 1,0.1 2.6,0.1 Z" fill="#a074c4"/><path d="M5.9,0.7 V3.7 Q5.8,4.5 3.8,4.5" fill="none" stroke="#181818" stroke-width="0.8" opacity="0.85"/></g><g transform="translate(71.7,511.9) scale(1.0)"><path d="M2.6,0.1 C4,0 5,0.3 5.8,0.6 C6.6,0.2 8,0 9.5,0.1 C11.5,0.2 12.8,1.4 12.8,3.4 C12.8,5 12.2,6 11.4,6.6 V9.3 H8.2 V7.3 H6 V9.3 H3.3 V6.6 H2.7 V8.2 Q2.7,9.2 1.6,9.2 Q0.6,9.2 0.6,8 V6.6 C0.2,6 0,5 0,4.2 V2.6 C0,1 1,0.1 2.6,0.1 Z" fill="#a074c4"/><path d="M5.9,0.7 V3.7 Q5.8,4.5 3.8,4.5" fill="none" stroke="#37373d" stroke-width="0.8" opacity="0.85"/></g><path d="M75.7,293 H84.9 M75.7,295.6 H81 M75.7,298.3 H84.9 M75.7,300.8 H82" stroke="#c5c5c5" stroke-width="1.2"/><polygon points="68.79,598.87 70.00,598.81 70.87,600.34 71.75,600.66 73.39,600.02 74.29,600.84 73.82,602.53 74.22,603.38 75.83,604.09 75.89,605.30 74.36,606.17 74.04,607.05 74.68,608.69 73.86,609.59 72.17,609.12 71.32,609.52 70.61,611.13 69.40,611.19 68.53,609.66 67.65,609.34 66.01,609.98 65.11,609.16 65.58,607.47 65.18,606.62 63.57,605.91 63.51,604.70 65.04,603.83 65.36,602.95 64.72,601.31 65.54,600.41 67.23,600.88 68.08,600.48" fill="#6d8086"/><circle cx="69.7" cy="605" r="2.0" fill="#181818"/><polygon points="68.79,620.87 70.00,620.81 70.87,622.34 71.75,622.66 73.39,622.02 74.29,622.84 73.82,624.53 74.22,625.38 75.83,626.09 75.89,627.30 74.36,628.17 74.04,629.05 74.68,630.69 73.86,631.59 72.17,631.12 71.32,631.52 70.61,633.13 69.40,633.19 68.53,631.66 67.65,631.34 66.01,631.98 65.11,631.16 65.58,629.47 65.18,628.62 63.57,627.91 63.51,626.70 65.04,625.83 65.36,624.95 64.72,623.31 65.54,622.41 67.23,622.88 68.08,622.48" fill="#6d8086"/><circle cx="69.7" cy="627" r="2.0" fill="#181818"/><text x="70" y="654.5" text-anchor="middle" font-size="14" font-weight="bold" fill="#8dc149">$</text><path d="M69.6,665.4 L75.19999999999999,671 L69.6,676.6 L63.99999999999999,671 Z" fill="#4f6269"/><path d="M68.0,668.4 L70.8,671.2 M68.39999999999999,668.8 V673.6" stroke="#181818" stroke-width="1.1"/><circle cx="71.0" cy="671.4" r="0.9" fill="#181818"/><circle cx="68.39999999999999" cy="673.6" r="0.9" fill="#181818"/><path d="M69.6,687.4 L75.19999999999999,693 L69.6,698.6 L63.99999999999999,693 Z" fill="#4f6269"/><path d="M68.0,690.4 L70.8,693.2 M68.39999999999999,690.8 V695.6" stroke="#181818" stroke-width="1.1"/><circle cx="71.0" cy="693.4" r="0.9" fill="#181818"/><circle cx="68.39999999999999" cy="695.6" r="0.9" fill="#181818"/></g>
<rect x="48" y="136" width="280" height="3" fill="url(#shadow)"/>
<g transform="translate(507.5,47.4) scale(1.0)"><path d="M2.6,0.1 C4,0 5,0.3 5.8,0.6 C6.6,0.2 8,0 9.5,0.1 C11.5,0.2 12.8,1.4 12.8,3.4 C12.8,5 12.2,6 11.4,6.6 V9.3 H8.2 V7.3 H6 V9.3 H3.3 V6.6 H2.7 V8.2 Q2.7,9.2 1.6,9.2 Q0.6,9.2 0.6,8 V6.6 C0.2,6 0,5 0,4.2 V2.6 C0,1 1,0.1 2.6,0.1 Z" fill="#a074c4"/><path d="M5.9,0.7 V3.7 Q5.8,4.5 3.8,4.5" fill="none" stroke="#181818" stroke-width="0.8" opacity="0.85"/></g>
<g transform="translate(818.7,47.4) scale(1.0)"><path d="M2.6,0.1 C4,0 5,0.3 5.8,0.6 C6.6,0.2 8,0 9.5,0.1 C11.5,0.2 12.8,1.4 12.8,3.4 C12.8,5 12.2,6 11.4,6.6 V9.3 H8.2 V7.3 H6 V9.3 H3.3 V6.6 H2.7 V8.2 Q2.7,9.2 1.6,9.2 Q0.6,9.2 0.6,8 V6.6 C0.2,6 0,5 0,4.2 V2.6 C0,1 1,0.1 2.6,0.1 Z" fill="#a074c4"/><path d="M5.9,0.7 V3.7 Q5.8,4.5 3.8,4.5" fill="none" stroke="#181818" stroke-width="0.8" opacity="0.85"/></g>
<g transform="translate(955,47.4) scale(1.0)"><path d="M2.6,0.1 C4,0 5,0.3 5.8,0.6 C6.6,0.2 8,0 9.5,0.1 C11.5,0.2 12.8,1.4 12.8,3.4 C12.8,5 12.2,6 11.4,6.6 V9.3 H8.2 V7.3 H6 V9.3 H3.3 V6.6 H2.7 V8.2 Q2.7,9.2 1.6,9.2 Q0.6,9.2 0.6,8 V6.6 C0.2,6 0,5 0,4.2 V2.6 C0,1 1,0.1 2.6,0.1 Z" fill="#a074c4"/><path d="M5.9,0.7 V3.7 Q5.8,4.5 3.8,4.5" fill="none" stroke="#181818" stroke-width="0.8" opacity="0.85"/></g>
<g transform="translate(1098.4,47.4) scale(1.0)"><path d="M2.6,0.1 C4,0 5,0.3 5.8,0.6 C6.6,0.2 8,0 9.5,0.1 C11.5,0.2 12.8,1.4 12.8,3.4 C12.8,5 12.2,6 11.4,6.6 V9.3 H8.2 V7.3 H6 V9.3 H3.3 V6.6 H2.7 V8.2 Q2.7,9.2 1.6,9.2 Q0.6,9.2 0.6,8 V6.6 C0.2,6 0,5 0,4.2 V2.6 C0,1 1,0.1 2.6,0.1 Z" fill="#a074c4"/><path d="M5.9,0.7 V3.7 Q5.8,4.5 3.8,4.5" fill="none" stroke="#1f1f1f" stroke-width="0.8" opacity="0.85"/></g>
<path d="M1185,48.3 L1194.7,58 M1194.7,48.3 L1185,58" stroke="#ffffff" stroke-width="1.3"/>
<path d="M1224.2,48.6 L1220.2,52.4 L1224.2,56.2 M1226.3,48.6 L1230.3,52.4 L1226.3,56.2" fill="none" stroke="#e37933" stroke-width="1.7"/>
<path d="M1273.3,47.6 L1282.4,53.4 L1273.3,59.2 Z" fill="none" stroke="#cccccc" stroke-width="1.1" stroke-linejoin="round"/>
<polyline points="1290.4,51.3 1294.2,55 1297.9,51.3" fill="none" stroke="#cccccc" stroke-width="1.1"/>
<rect x="1311.6" y="46.6" width="12.4" height="12" rx="1.2" fill="none" stroke="#cccccc" stroke-width="1.1"/>
<rect x="1317.2" y="46.6" width="1.1" height="12" fill="#cccccc"/>
<rect x="1337.4" y="52" width="2" height="2" fill="#cccccc"/>
<rect x="1342.2" y="52" width="2" height="2" fill="#cccccc"/>
<rect x="1347" y="52" width="2" height="2" fill="#cccccc"/>
<polyline points="388,77.3 392.6,81.9 388,86.5" fill="none" stroke="#a9a9a9" stroke-width="1.1"/>
<g transform="translate(400.7,77.2) scale(1.0)"><path d="M2.6,0.1 C4,0 5,0.3 5.8,0.6 C6.6,0.2 8,0 9.5,0.1 C11.5,0.2 12.8,1.4 12.8,3.4 C12.8,5 12.2,6 11.4,6.6 V9.3 H8.2 V7.3 H6 V9.3 H3.3 V6.6 H2.7 V8.2 Q2.7,9.2 1.6,9.2 Q0.6,9.2 0.6,8 V6.6 C0.2,6 0,5 0,4.2 V2.6 C0,1 1,0.1 2.6,0.1 Z" fill="#a074c4"/><path d="M5.9,0.7 V3.7 Q5.8,4.5 3.8,4.5" fill="none" stroke="#1f1f1f" stroke-width="0.8" opacity="0.85"/></g>
<polyline points="474.5,77.3 479.1,81.9 474.5,86.5" fill="none" stroke="#a9a9a9" stroke-width="1.1"/>
<rect x="1256" y="92" width="5" height="1" fill="#569cd6" opacity="0.45"/>
<rect x="1256" y="96" width="3" height="1" fill="#569cd6" opacity="0.45"/><rect x="1260" y="96" width="27" height="1" fill="#aaaaaa" opacity="0.35"/><rect x="1287" y="96" width="5" height="1" fill="#4ec9b0" opacity="0.45"/>
<rect x="1256" y="104" width="4" height="2" fill="#264f78"/><rect x="1256" y="100" width="29" height="1" fill="#aaaaaa" opacity="0.18"/><rect x="1260" y="102" width="33" height="1" fill="#aaaaaa" opacity="0.18"/>
<rect x="1127.2" y="355.8" width="13.6" height="12.6" rx="1" fill="none" stroke="#cccccc" stroke-width="1"/>
<path d="M1129.8,359 L1132.6,361.6 L1129.8,364.2 M1133.4,365.4 H1137.4" fill="none" stroke="#cccccc" stroke-width="1"/>
<path d="M1180,362 H1193.4 M1186.7,355.3 V368.7" stroke="#cccccc" stroke-width="1.1"/>
<polyline points="1198.8,360.3 1203.1,364.4 1207.4,360.3" fill="none" stroke="#cccccc" stroke-width="1"/>
<rect x="1220.3" y="355.8" width="12.2" height="12.6" rx="1" fill="none" stroke="#cccccc" stroke-width="1.1"/>
<rect x="1225.9" y="355.8" width="1" height="12.6" fill="#cccccc"/>
<path d="M1245.5,357.4 H1257.9 M1249.5,357.4 V355.6 H1253.9 V357.4 M1247,357.4 L1247.8,368.3 H1255.6 L1256.4,357.4 M1249.6,359.6 V366.2 M1251.7,359.6 V366.2 M1253.8,359.6 V366.2" fill="none" stroke="#cccccc" stroke-width="1"/>
<rect x="1271.6" y="361" width="2" height="2" fill="#cccccc"/>
<rect x="1277.1" y="361" width="2" height="2" fill="#cccccc"/>
<rect x="1282.6" y="361" width="2" height="2" fill="#cccccc"/>
<rect x="1297" y="354.6" width="1" height="14.8" fill="#4b4b4b"/>
<path d="M1311,359.5 V356 H1314.5 M1319.8,356 H1323.3 V359.5 M1323.3,364.6 V368.1 H1319.8 M1314.5,368.1 H1311 V364.6" fill="none" stroke="#cccccc" stroke-width="1.1"/>
<path d="M1338.5,357.2 L1348,366.7 M1348,357.2 L1338.5,366.7" stroke="#cccccc" stroke-width="1.1"/>
<circle cx="340.2" cy="446.4" r="3.1" fill="none" stroke="#8a8a8a" stroke-width="1.6"/>
<path d="M409,158.5 Q410.59,162.21 414.3,163.8 Q410.59,165.39000000000001 409,169.10000000000002 Q407.41,165.39000000000001 403.7,163.8 Q407.41,162.21 409,158.5 Z" fill="#ffcc00"/>
<path d="M415.1,166.7 Q416.12,169.07999999999998 418.5,170.1 Q416.12,171.12 415.1,173.5 Q414.08000000000004,171.12 411.70000000000005,170.1 Q414.08000000000004,169.07999999999998 415.1,166.7 Z" fill="#ffcc00"/>
<path d="M12.8,752.2 L16.9,756.4 L12.8,760.6 M21.4,749.2 L17.6,753 L21.4,756.8" fill="none" stroke="#ffffff" stroke-width="1.3"/>
<circle cx="49" cy="755" r="6" fill="none" stroke="#cccccc" stroke-width="1.1"/>
<path d="M46.5,752.5 L51.5,757.5 M51.5,752.5 L46.5,757.5" stroke="#cccccc" stroke-width="1.1"/>
<path d="M76,749.2 L82.2,760.2 H69.8 Z" fill="none" stroke="#cccccc" stroke-width="1.1" stroke-linejoin="round"/>
<path d="M76,753.2 V757 M76,758.2 V759.2" stroke="#cccccc" stroke-width="1.1"/>
<path d="M118.5,749.2 L113.5,755.5 H117 L113,761.2 M118.5,749.2 L116.4,754 H120.2 L114.2,760.4" fill="none" stroke="#cccccc" stroke-width="1"/>
<path d="M1108.8,749.6 H1108.2 Q1107.3,749.6 1107.3,750.6 V753.6 Q1107.3,754.9 1106.3,754.9 Q1107.3,754.9 1107.3,756.2 V759.2 Q1107.3,760.2 1108.2,760.2 H1108.8 M1114.6,749.6 H1115.2 Q1116.1,749.6 1116.1,750.6 V753.6 Q1116.1,754.9 1117.1,754.9 Q1116.1,754.9 1116.1,756.2 V759.2 Q1116.1,760.2 1115.2,760.2 H1114.6" fill="none" stroke="#cccccc" stroke-width="1.1"/>
<path d="M1163.6,756.5 Q1163.3,750.6 1166.5,750.2 H1173.1 Q1176.3,750.6 1176,756.5 V758.4 Q1176,760.9 1173.1,761 H1166.5 Q1163.6,760.9 1163.6,758.4 Z" fill="none" stroke="#cccccc" stroke-width="1.5"/>
<circle cx="1167.4" cy="753.9" r="1.9" fill="none" stroke="#cccccc" stroke-width="1.3"/><circle cx="1172.2" cy="753.9" r="1.9" fill="none" stroke="#cccccc" stroke-width="1.3"/><path d="M1167.8,757.3 V759.4 M1171.8,757.3 V759.4" stroke="#cccccc" stroke-width="1.4"/>
<circle cx="1199.8" cy="754.8" r="1.5" fill="#cccccc"/><path d="M1199.8,756.3 V761.6" stroke="#cccccc" stroke-width="1.6" stroke-linecap="round"/>
<path d="M1197.4,757.3 A3.4,3.4 0 1 1 1202.2,757.3 M1195.7,759 A5.8,5.8 0 1 1 1203.9,759" fill="none" stroke="#cccccc" stroke-width="1.1"/>
<circle cx="1272" cy="755.2" r="5.7" fill="none" stroke="#cccccc" stroke-width="1.1"/><path d="M1268,759.2 L1276,751.2" stroke="#cccccc" stroke-width="1.1"/>
<path d="M1338.9,759 H1349.7 Q1347.8,757.6 1347.8,754.4 V753.2 Q1347.8,749 1344.3,749 Q1340.8,749 1340.8,753.2 V754.4 Q1340.8,757.6 1338.9,759 Z M1342.4,760.6 Q1344.3,762.6 1346.2,760.6" fill="none" stroke="#cccccc" stroke-width="1.1"/>
</svg>
</body></html>
